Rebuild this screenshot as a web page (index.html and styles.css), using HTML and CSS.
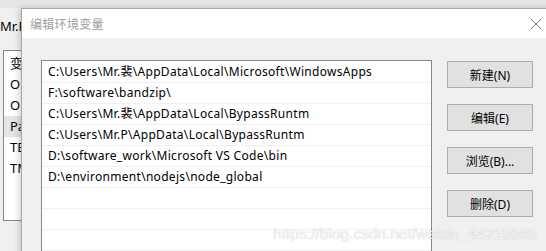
FILE: index.html
```html
<!DOCTYPE html>
<html lang="zh-CN">
<head>
  <meta charset="UTF-8">
  <title>编辑环境变量</title>
  <link rel="stylesheet" href="styles.css">
</head>
<body>
  <div class="desktop">
    <!-- window behind the dialog -->
    <div class="back-window">
      <div class="back-title">Mr.P</div>
      <ul class="back-list">
        <li>变</li>
        <li>On</li>
        <li>On</li>
        <li class="selected">Pa</li>
        <li>TE</li>
        <li>TM</li>
      </ul>
    </div>

    <!-- edit dialog -->
    <div class="dialog">
      <div class="dialog-title">
        <span class="title-text">编辑环境变量</span>
        <button class="close-btn" type="button" title="关闭">
          <svg width="12" height="12" viewBox="0 0 12 12" fill="none" stroke="#7a7a7a" stroke-width="1">
            <path d="M1 1L11 11M11 1L1 11"/>
          </svg>
        </button>
      </div>
      <div class="dialog-body">
        <ul class="path-list">
          <li>C:\Users\Mr.裴\AppData\Local\Microsoft\WindowsApps</li>
          <li>F:\software\bandzip\</li>
          <li>C:\Users\Mr.裴\AppData\Local\BypassRuntm</li>
          <li>C:\Users\Mr.P\AppData\Local\BypassRuntm</li>
          <li>D:\software_work\Microsoft VS Code\bin</li>
          <li>D:\environment\nodejs\node_global</li>
          <li></li>
          <li></li>
          <li></li>
        </ul>
        <div class="actions">
          <button type="button">新建(N)</button>
          <button type="button">编辑(E)</button>
          <button type="button">浏览(B)...</button>
          <button type="button">删除(D)</button>
        </div>
      </div>
    </div>

    <div class="watermark">https://blog.csdn.net/weixin_44215595</div>
  </div>
</body>
</html>
```

FILE: styles.css
```css
body {
  margin: 0;
  font-family: "Noto Sans", "Noto Sans CJK SC", sans-serif;
  font-size: 12px;
  color: #000;
  background-color: #f0f0f0;
  overflow: hidden;
}

ul {
  list-style: none;
  margin: 0;
  padding: 0;
}

.desktop {
  position: relative;
  width: 546px;
  height: 251px;
  overflow: hidden;
  background: linear-gradient(#e6e6e6 0, #e6e6e6 8px, #f0f0f0 8px);
}

/* Window behind */
.back-window {
  padding-top: 17px;
}

.back-title {
  font-size: 13px;
  height: 18px;
  line-height: 18px;
}

.back-list {
  margin: 15px 0 0 3px;
  width: 60px;
  height: 167px;
  background: #fff;
  border: 1px solid #828790;
  padding-top: 2px;
}

.back-list li {
  height: 21px;
  line-height: 21px;
  padding-left: 6px;
  font-size: 13px;
}

.back-list li.selected {
  background-color: #e5e5e5;
}

/* Dialog */
.dialog {
  position: absolute;
  left: 21px;
  top: 8px;
  width: 540px;
  height: 260px;
  background-color: #f0f0f0;
  border: 1px solid #a9a9a9;
  box-shadow: -2px 0 6px rgba(0, 0, 0, 0.18);
}

.dialog-title {
  height: 29px;
  background: #fff;
  display: flex;
  align-items: center;
  justify-content: space-between;
  padding-left: 8px;
  padding-right: 10px;
}

.title-text {
  color: #a0a0a0;
  font-size: 12px;
  letter-spacing: 0.3px;
}

.close-btn {
  background: none;
  border: none;
  padding: 0;
  margin-right: 10px;
  display: flex;
  align-items: center;
}

.dialog-body {
  display: flex;
  gap: 15px;
  padding: 22px 0 0 19px;
}

.path-list {
  width: 389px;
  height: 200px;
  background: #fff;
  border: 1px solid #828790;
  padding-top: 1px;
}

.path-list li {
  height: 20px;
  line-height: 20px;
  border-bottom: 1px solid #f0f0f0;
  padding-left: 6px;
  white-space: nowrap;
  letter-spacing: 0.3px;
}

.actions {
  display: flex;
  flex-direction: column;
  gap: 16px;
  padding-top: 1px;
}

.actions button {
  width: 86px;
  height: 27px;
  font-family: inherit;
  font-size: 12px;
  color: #000;
  background-color: #e1e1e1;
  border: 1px solid #adadad;
  padding: 0;
}

.watermark {
  position: absolute;
  right: 9px;
  bottom: 8px;
  font-family: "Liberation Sans", Arial, sans-serif;
  font-size: 15.5px;
  color: rgba(255, 255, 255, 0.9);
  text-shadow: 0 0 1px rgba(0, 0, 0, 0.3);
}
```
